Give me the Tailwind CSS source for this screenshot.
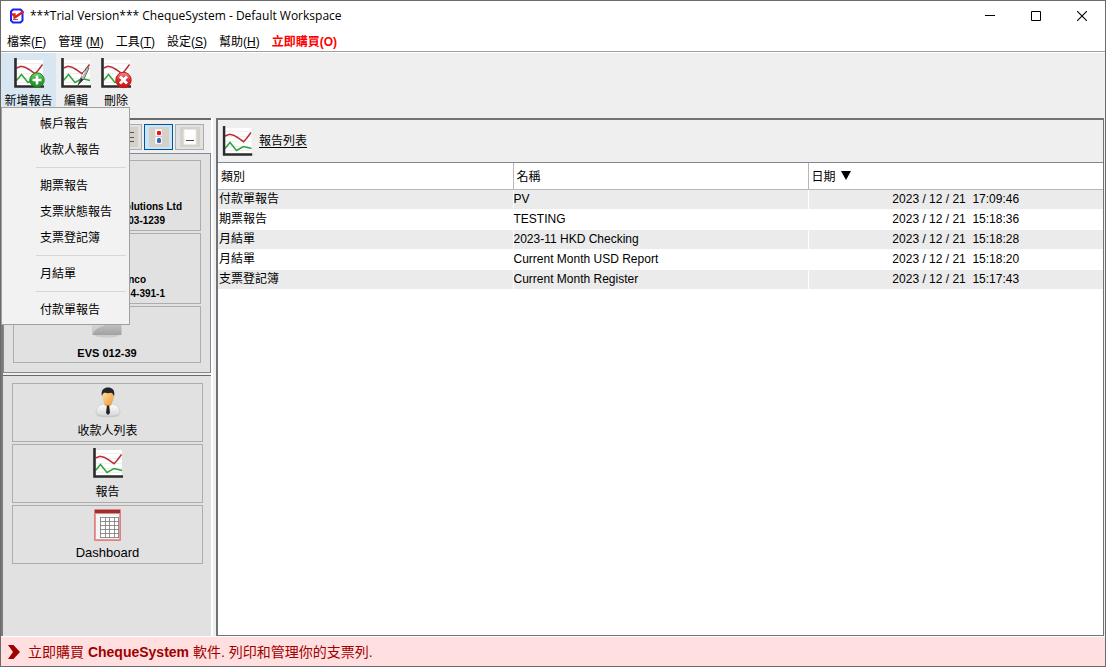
<!DOCTYPE html>
<html lang="zh-Hant">
<head>
<meta charset="utf-8">
<title>ChequeSystem - Default Workspace</title>
<script src="https://cdn.jsdelivr.net/npm/@tailwindcss/browser@4"></script>
</head>
<body class="font-['Liberation_Sans','Noto_Sans_CJK_TC',sans-serif] text-xs text-black">
<svg class="absolute h-0 w-0" aria-hidden="true">
  <defs>
    <linearGradient id="green" x1="0" y1="0" x2="0" y2="1"><stop offset="0" stop-color="#7fd07f"/><stop offset=".5" stop-color="#2ea32e"/><stop offset="1" stop-color="#1f8a22"/></linearGradient>
    <linearGradient id="red" x1="0" y1="0" x2="0" y2="1"><stop offset="0" stop-color="#f08c8c"/><stop offset=".5" stop-color="#dd2a2a"/><stop offset="1" stop-color="#c81414"/></linearGradient>
    <linearGradient id="shirt" x1="0" y1="0" x2="0" y2="1"><stop offset="0" stop-color="#ffffff"/><stop offset="1" stop-color="#d4d4d4"/></linearGradient>
    <linearGradient id="face" x1="0" y1="0" x2="1" y2="1"><stop offset="0" stop-color="#ffe2a8"/><stop offset="1" stop-color="#f09a3c"/></linearGradient>
    <linearGradient id="metal" x1="0" y1="0" x2="0" y2="1"><stop offset="0" stop-color="#e6e6e6"/><stop offset="1" stop-color="#a2a2a2"/></linearGradient>
    <symbol id="chart" viewBox="0 0 30 30">
      <rect x="2" y="2" width="27" height="26" fill="#fff"/>
      <path d="M3 5.500h26M3 10.500h26M3 15.500h26M3 20.500h26M3 24.500h26" stroke="#f0f0f0"/>
      <path d="M2.500 10 7 8.300 11 9.200 15 11.500 21 15.700 24 12.500 28.500 6.500" fill="none" stroke="#b92f35" stroke-width="1.500"/>
      <path d="M2.500 22.500 7.500 16.500 14 24.500 21 20.500 29 22.500" fill="none" stroke="#2fa336" stroke-width="1.500"/>
      <path d="M1.500 0v28.500H30" fill="none" stroke="#2b2b2b" stroke-width="2.600"/>
    </symbol>
  </defs>
</svg>
<div class="relative flex min-h-screen flex-col border border-[#6b6b6b] bg-white">
  <header class="flex h-[30px] items-center pl-2">
    <svg class="mr-[5px] h-4 w-4" viewBox="0 0 16 16" fill="none"><path d="M4 1.500h7.500l2 2v9l-2 2H4l-2-2v-9z" stroke="#2020f0" stroke-width="2"/><path d="M4 11.500h5" stroke="#667" /><path d="M2.500 6.500h3v4M5 10 8 8 14.500 3.500" stroke="#e02020" stroke-width="2.400"/></svg>
    <h1 class="flex-1 font-['Open_Sans',sans-serif] text-xs">***Trial Version*** ChequeSystem - Default Workspace</h1>
    <button aria-label="Minimize" class="flex h-full w-[46px] items-center justify-center"><svg class="h-2.5 w-2.5" viewBox="0 0 10 10"><path d="M0 4.500h10" stroke="#000"/></svg></button>
    <button aria-label="Maximize" class="flex h-full w-[46px] items-center justify-center"><svg class="h-2.5 w-2.5" viewBox="0 0 10 10"><path d="M.5.500h9v9h-9z" fill="none" stroke="#000"/></svg></button>
    <button aria-label="Close" class="flex h-full w-[46px] items-center justify-center"><svg class="h-2.5 w-2.5" viewBox="0 0 10 10"><path d="M0 0 10 10M10 0 0 10" stroke="#000" stroke-width="1.100"/></svg></button>
  </header>
  <nav class="flex h-[21px] items-center gap-3 border-b border-[#a0a0a0] pt-px pl-1.5 leading-4">
    <button>檔案(<u>F</u>)</button>
    <button>管理 (<u>M</u>)</button>
    <button>工具(<u>T</u>)</button>
    <button>設定(<u>S</u>)</button>
    <button>幫助(<u>H</u>)</button>
    <button class="font-bold text-[#ff0000]">立即購買(O)</button>
  </nav>
  <div class="mt-px flex h-[65px] items-start bg-[#efefef]">
    <button class="flex w-[55px] flex-col items-center gap-[5px] bg-[#d8e6f2] pt-[5px] leading-4">
      <svg class="h-[30px] w-[30px] overflow-visible" viewBox="0 0 30 30"><use href="#chart"/><circle cx="23" cy="22" r="7.200" fill="url(#green)" stroke="#208224"/><path d="M23 17.500v9M18.500 22h9" stroke="#fff" stroke-width="2.600"/></svg>
      <span>新增報告</span></button>
    <button class="flex w-10 flex-col items-center gap-[5px] pt-[5px] leading-4">
      <svg class="h-[30px] w-[30px] overflow-visible" viewBox="0 0 30 30"><use href="#chart"/><path d="M17 27 20 19.500 26 9l2 1-5 11z" fill="#bbb" stroke="#555" stroke-width=".8"/><path d="M17 27 20 20l2.500 1.500z" fill="#333"/><path d="M23.500 13.500 21 18.500" stroke="#fff"/></svg>
      <span>編輯</span></button>
    <button class="flex w-10 flex-col items-center gap-[5px] pt-[5px] leading-4">
      <svg class="h-[30px] w-[30px] overflow-visible" viewBox="0 0 30 30"><use href="#chart"/><circle cx="22.500" cy="22" r="7.700" fill="url(#red)" stroke="#c21a1a"/><path d="M19 18.500l7 7M26 18.500l-7 7" stroke="#fff" stroke-width="2.900"/></svg>
      <span>刪除</span></button>
  </div>
  <main class="flex flex-1 bg-[#efefef]">
    <aside class="flex w-[212px] shrink-0 flex-col border-r-2 border-l-2 border-r-white border-l-[#7a7a7a]">
      <div class="border-t-2 border-[#696969]">
        <div class="flex h-[33px] items-center justify-end gap-0.5 pr-[7px]">
          <button aria-label="List" class="flex h-[26px] w-[29px] items-center justify-center border border-[#adadad] bg-[#e1e1e1]"><svg class="h-5 w-5" viewBox="0 0 20 20"><path d="M0 0h20v20H0z" fill="#d6d1c8"/><path d="M4 5.500h12M4 10.500h12M4 14.500h12" stroke="#555"/></svg></button>
          <button aria-label="Icons" class="flex h-[26px] w-[29px] items-center justify-center border border-[#005499] bg-[#cce4f7]"><svg class="h-5 w-5" viewBox="0 0 20 20"><path d="M0 0h20v20H0z" fill="#d6d1c8"/><path d="M6 2h7v7H6zM6 10h7v7H6z" fill="#fff" stroke="#ccc" stroke-width=".5"/><rect x="8" y="4" width="4" height="4" rx="1" fill="#e81414"/><rect x="8" y="11" width="4" height="5" rx="1.500" fill="#3c64c0"/></svg></button>
          <button aria-label="Collapse" class="flex h-[26px] w-[29px] items-center justify-center border border-[#adadad] bg-[#e1e1e1]"><svg class="h-5 w-5" viewBox="0 0 20 20"><path d="M0 0h20v20H0z" fill="#d6d1c8"/><path d="M4 2.500h12v15H4z" fill="#fff" stroke="#e8e8e8"/><path d="M6 13.500h8" stroke="#444"/></svg></button>
        </div>
        <div class="flex flex-col gap-0.5 border border-[#828790] bg-[#e1e1e1] px-[9px] pt-1.5 pb-[9px] text-[10px] leading-[14px] font-bold">
          <button class="flex h-[71px] flex-col items-end justify-end border border-[#adadad] pb-0.5"><span class="pr-[18px]">Solutions Ltd</span><span class="pr-[35px]">03-1239</span></button>
          <button class="flex h-[71px] flex-col items-end justify-end border border-[#adadad] pb-0.5"><span class="pr-[54px]">nco</span><span class="pr-[35px]">4-391-1</span></button>
          <button class="flex h-[57px] flex-col items-center justify-between border border-[#adadad] pb-0.5 text-[11px]">
            <svg class="h-[31px] w-[30px]" viewBox="0 0 30 31"><ellipse cx="15" cy="28.500" rx="12" ry="2" fill="#cbcbcb"/><path d="M.5 4h29v24H.5z" fill="url(#metal)"/><path d="M1 27C3 20 14 17 29 16V5H1z" fill="#fff" opacity=".35"/></svg>
            EVS 012-39</button>
        </div>
      </div>
      <div class="mt-0.5 flex flex-1 flex-col gap-0.5 border-t border-t-[#696969] bg-[#e1e1e1] pt-[7px] pr-2 pl-[9px]">
        <button class="flex h-[59px] flex-col items-center justify-between border border-[#adadad] pt-[3px] pb-0.5 leading-4">
          <svg class="h-[31px] w-[26px]" viewBox="0 0 26 31"><ellipse cx="13" cy="28.500" rx="11" ry="1.800" fill="#c9c9c9"/><path d="M1 27C1 20 4 18 9 17l4 2 4-2c5 1 8 3 8 10-5 3-19 3-24 0z" fill="url(#shirt)" stroke="#c2c2c2" stroke-width=".6"/><path d="M9.500 14h7v4L13 20l-3.500-2z" fill="#eaa040"/><ellipse cx="13" cy="10.500" rx="5.600" ry="7.500" fill="url(#face)"/><path d="M7 9.500C5.500 3 9 .5 13 .5s7.500 2.500 6 9c-.6-2-1.500-3.500-3-3.800C13.500 6.500 10 6 9 5.800 8 6.500 7.300 8 7 9.500z" fill="#242424"/><path d="M12 18.500h2l.4 2L15 26l-2 2-2-2 .7-5.500z" fill="#222"/></svg>
          收款人列表</button>
        <button class="flex h-[59px] flex-col items-center justify-between border border-[#adadad] pt-[3px] pb-0.5 leading-4"><svg class="h-[30px] w-[30px]"><use href="#chart"/></svg>報告</button>
        <button class="flex h-[59px] flex-col items-center justify-between border border-[#adadad] pt-[3px] pb-0.5 text-[13px] leading-4">
          <svg class="h-8 w-[27px]" viewBox="0 0 27 32"><path d="M.5.500h26v31H.5z" fill="#f4f4f4" stroke="#df8080"/><path d="M1 1h25v3.500H1z" fill="#a02c2c"/><path d="M1.500 5v26M25.500 5v26M1 30.500h25" stroke="#e69a9a"/><path d="M6.500 7.500h18v21h-18z" fill="#fff"/><path d="M6.500 8v21M11.500 8v21M15.500 8v21M20.500 8v21M24.500 8v21M6 8.500h19M6 12.500h19M6 16.500h19M6 20.500h19M6 24.500h19M6 28.500h19" stroke="#777" stroke-width=".8"/></svg>
          Dashboard</button>
      </div>
    </aside>
    <section class="mr-px ml-[3px] flex flex-1 flex-col border-t-2 border-r border-b border-l-2 border-[#707378]">
      <div class="flex h-[42px] items-center gap-1.5 pl-1">
        <svg class="h-[30px] w-[31px]" viewBox="0 0 30 30"><use href="#chart"/></svg>
        <a href="#reports" class="underline underline-offset-2">報告列表</a>
      </div>
      <div id="reports" class="flex-1 border-t border-[#828790] bg-white">
        <table class="w-full table-fixed border-collapse text-left leading-4">
          <thead><tr class="h-[26px] border-b border-[#b8b8b8]">
            <th class="border-r border-[#b8b8b8] px-[3px] pt-[3px] font-normal">類別</th>
            <th class="border-r border-[#b8b8b8] px-[3px] pt-[3px] font-normal">名稱</th>
            <th class="px-[3px] pt-[3px] font-normal">日期 <svg class="ml-0.5 inline h-2.5 w-2.5 align-baseline" viewBox="0 0 10 10"><path d="M0 0h10L5 9z"/></svg></th></tr></thead>
          <tbody>
            <tr class="h-5 border-b border-white bg-[#ebebeb]"><td class="border-r border-white px-px">付款單報告</td><td class="border-r border-white">PV</td><td class="text-center whitespace-pre">2023 / 12 / 21  17:09:46</td></tr>
            <tr class="h-5 border-b border-white"><td class="border-r border-white px-px">期票報告</td><td class="border-r border-white">TESTING</td><td class="text-center whitespace-pre">2023 / 12 / 21  15:18:36</td></tr>
            <tr class="h-5 border-b border-white bg-[#ebebeb]"><td class="border-r border-white px-px">月結單</td><td class="border-r border-white">2023-11 HKD Checking</td><td class="text-center whitespace-pre">2023 / 12 / 21  15:18:28</td></tr>
            <tr class="h-5 border-b border-white"><td class="border-r border-white px-px">月結單</td><td class="border-r border-white">Current Month USD Report</td><td class="text-center whitespace-pre">2023 / 12 / 21  15:18:20</td></tr>
            <tr class="h-5 border-b border-white bg-[#ebebeb]"><td class="border-r border-white px-px">支票登記簿</td><td class="border-r border-white">Current Month Register</td><td class="text-center whitespace-pre">2023 / 12 / 21  15:17:43</td></tr>
          </tbody>
        </table>
      </div>
    </section>
  </main>
  <footer class="flex h-[30px] items-center border-t border-white bg-[#ffdfdf] pl-[7px] text-sm text-[#a00000]">
    <svg class="mr-2 h-3.5 w-3" viewBox="0 0 12 14"><path d="M0 0h5.500L12 7l-6.500 7H0l5-7z" fill="#a00000"/></svg>
    <a href="#buy">立即購買 <b>ChequeSystem</b> 軟件. 列印和管理你的支票列.</a>
  </footer>
  <div role="menu" class="absolute top-[106px] left-0 flex w-[129px] flex-col border border-[#a0a0a0] bg-[#f2f2f2] pt-[3px] pb-px">
    <button role="menuitem" class="h-[26px] pl-[38px] text-left">帳戶報告</button>
    <button role="menuitem" class="h-[26px] pl-[38px] text-left">收款人報告</button>
    <hr class="my-1 mr-[3px] ml-[34px] h-0.5 border-0 border-t border-[#d7d7d7]">
    <button role="menuitem" class="h-[26px] pl-[38px] text-left">期票報告</button>
    <button role="menuitem" class="h-[26px] pl-[38px] text-left">支票狀態報告</button>
    <button role="menuitem" class="h-[26px] pl-[38px] text-left">支票登記簿</button>
    <hr class="my-1 mr-[3px] ml-[34px] h-0.5 border-0 border-t border-[#d7d7d7]">
    <button role="menuitem" class="h-[26px] pl-[38px] text-left">月結單</button>
    <hr class="my-1 mr-[3px] ml-[34px] h-0.5 border-0 border-t border-[#d7d7d7]">
    <button role="menuitem" class="h-[26px] pl-[38px] text-left">付款單報告</button>
  </div>
</div>
</body>
</html>
